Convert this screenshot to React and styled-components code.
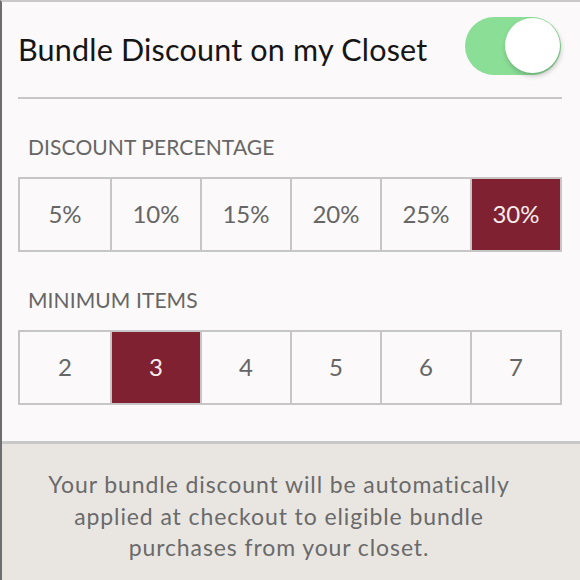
import React from "react";
import styled, { createGlobalStyle } from "styled-components";

const Global = createGlobalStyle`
  html, body { margin: 0; padding: 0; background: #e9e6e2; }
  body { font-family: Lato, "Noto Sans", sans-serif; }
`;

const Page = styled.div`
  width: 580px;
  height: 580px;
  box-sizing: border-box;
  border-top: 2px solid #c9c9c9;
  border-left: 2px solid #6e6e6e;
  display: flex;
  flex-direction: column;
  overflow: hidden;
`;

const Panel = styled.div`
  background: #fbf9f9;
  padding: 0 18px 0 16px;
  height: 442px;
  flex: none;
  box-sizing: border-box;
  border-bottom: 3px solid #c8c8c8;
`;

const Header = styled.div`
  height: 95px;
  display: flex;
  align-items: center;
  justify-content: space-between;
`;

const Title = styled.h1`
  margin: 0 0 1px 0;
  font-weight: 400;
  font-size: 30.5px;
  color: #151515;
  letter-spacing: 0.2px;
`;

const Toggle = styled.div`
  width: 96px;
  height: 58px;
  border-radius: 29px;
  background: #8ade96;
  position: relative;
  flex: none;
  margin: 0 1px 7px 0;
`;

const Knob = styled.div`
  position: absolute;
  right: 1px;
  top: 1px;
  width: 55px;
  height: 55px;
  border-radius: 50%;
  background: #ffffff;
  box-shadow: 1px 3px 5px rgba(0, 0, 0, 0.22);
`;

const Divider = styled.div`
  height: 2px;
  background: #c8c8c8;
`;

const Label = styled.div`
  font-size: 21px;
  color: #666666;
  padding-left: 10px;
  margin-top: ${(p) => p.$top}px;
  height: 24px;
  line-height: 24px;
  letter-spacing: 0.1px;
`;

const Options = styled.div`
  margin-top: ${(p) => p.$top}px;
  display: grid;
  grid-template-columns: repeat(6, 1fr);
  border: 2px solid #c6c6c6;
  height: 75px;
  box-sizing: border-box;
`;

const Option = styled.div`
  display: flex;
  align-items: center;
  justify-content: center;
  padding-bottom: 3px;
  font-size: 24px;
  color: ${(p) => (p.$active ? "#f6ecee" : "#666666")};
  background: ${(p) => (p.$active ? "#7f2130" : "transparent")};
  border-left: ${(p) => (p.$first ? "none" : "2px solid #c6c6c6")};
`;

const Footer = styled.div`
  flex: 1;
  background: #e9e6e2;
  display: flex;
  justify-content: center;
  padding: 25px 24px 0 0;
`;

const Note = styled.p`
  margin: 0;
  width: 480px;
  text-align: center;
  font-size: 23px;
  line-height: 31.5px;
  letter-spacing: 0.9px;
  color: #6a6a6a;
`;

const percents = ["5%", "10%", "15%", "20%", "25%", "30%"];
const items = ["2", "3", "4", "5", "6", "7"];

export default function App() {
  return (
    <>
      <Global />
      <Page>
        <Panel>
          <Header>
            <Title>Bundle Discount on my Closet</Title>
            <Toggle>
              <Knob />
            </Toggle>
          </Header>
          <Divider />
          <Label $top={36}>DISCOUNT PERCENTAGE</Label>
          <Options $top={18}>
            {percents.map((p, i) => (
              <Option key={p} $first={i === 0} $active={p === "30%"}>
                {p}
              </Option>
            ))}
          </Options>
          <Label $top={36}>MINIMUM ITEMS</Label>
          <Options $top={18}>
            {items.map((p, i) => (
              <Option key={p} $first={i === 0} $active={p === "3"}>
                {p}
              </Option>
            ))}
          </Options>
        </Panel>
        <Footer>
          <Note>
            Your bundle discount will be automatically applied at checkout to
            eligible bundle purchases from your closet.
          </Note>
        </Footer>
      </Page>
    </>
  );
}
